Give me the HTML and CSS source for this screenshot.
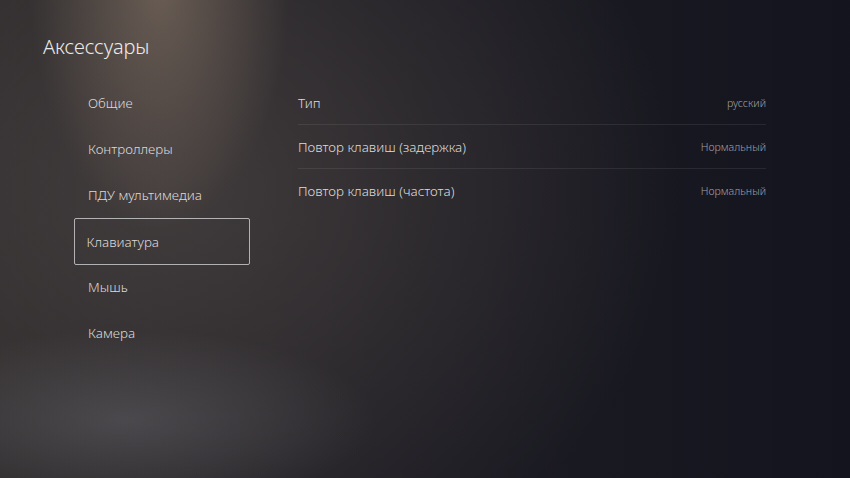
FILE: index.html
```html
<!DOCTYPE html>
<html lang="ru">
<head>
  <meta charset="UTF-8" />
  <meta name="viewport" content="width=device-width, initial-scale=1.0" />
  <title>Аксессуары</title>
  <link rel="stylesheet" href="styles.css">
</head>
<body>
  <div class="screen">
    <h1 class="title">Аксессуары</h1>
    <div class="content">
      <ul class="menu">
        <li class="menu-item">Общие</li>
        <li class="menu-item">Контроллеры</li>
        <li class="menu-item">ПДУ мультимедиа</li>
        <li class="menu-item active">Клавиатура</li>
        <li class="menu-item">Мышь</li>
        <li class="menu-item">Камера</li>
      </ul>
      <div class="settings">
        <div class="row">
          <span class="label">Тип</span>
          <span class="value">русский</span>
        </div>
        <div class="row">
          <span class="label">Повтор клавиш (задержка)</span>
          <span class="value">Нормальный</span>
        </div>
        <div class="row">
          <span class="label">Повтор клавиш (частота)</span>
          <span class="value">Нормальный</span>
        </div>
      </div>
    </div>
  </div>
</body>
</html>
```

FILE: styles.css
```css
:root {
  --text: #e6e4e2;
  --text-dim: #a2a1a5;
  --line: rgba(255, 255, 255, 0.08);
}

* {
  margin: 0;
  padding: 0;
  box-sizing: border-box;
  font-family: 'Noto Sans', 'Open Sans', sans-serif;
}

body {
  width: 850px;
  height: 478px;
  overflow: hidden;
  color: var(--text);
  background-color: #13141e;
  background-image:
    radial-gradient(ellipse 130px 250px at 160px -20px, rgba(160, 138, 118, 0.5), rgba(160, 138, 118, 0) 100%),
    radial-gradient(ellipse 250px 90px at 125px 420px, rgba(108, 108, 115, 0.42), rgba(108, 108, 115, 0) 100%),
    radial-gradient(ellipse 520px 430px at 160px 190px, rgba(68, 62, 62, 0.9), rgba(68, 62, 62, 0) 100%),
    linear-gradient(to right, #2a2829 0%, #1e1d24 45%, #13141e 100%);
}

.screen {
  padding: 33px 0 0 43px;
}

.title {
  font-size: 20px;
  font-weight: 300;
  line-height: 28px;
  height: 47px;
  color: #ecebea;
  letter-spacing: -0.1px;
}

.content {
  display: flex;
  gap: 48px;
  padding-left: 31px;
}

.menu {
  list-style: none;
  width: 176px;
}

.menu-item {
  height: 46px;
  display: flex;
  align-items: center;
  padding-left: 13px;
  font-size: 13.4px;
  font-weight: 300;
  color: #dcdad9;
  border: 1.5px solid transparent;
  border-radius: 2px;
}

.menu-item.active {
  height: 47px;
  margin-bottom: -1px;
  border-color: rgba(230, 230, 232, 0.7);
  padding-left: 11.5px;
}

.settings {
  width: 468px;
  padding-top: 1px;
}

.row {
  height: 44px;
  display: flex;
  align-items: center;
  justify-content: space-between;
  border-bottom: 1px solid var(--line);
}

.row:last-child {
  border-bottom: none;
}

.label {
  font-size: 13.4px;
  font-weight: 300;
  color: #dddcde;
}

.value {
  font-size: 10.6px;
  font-weight: 300;
  color: var(--text-dim);
}
```
